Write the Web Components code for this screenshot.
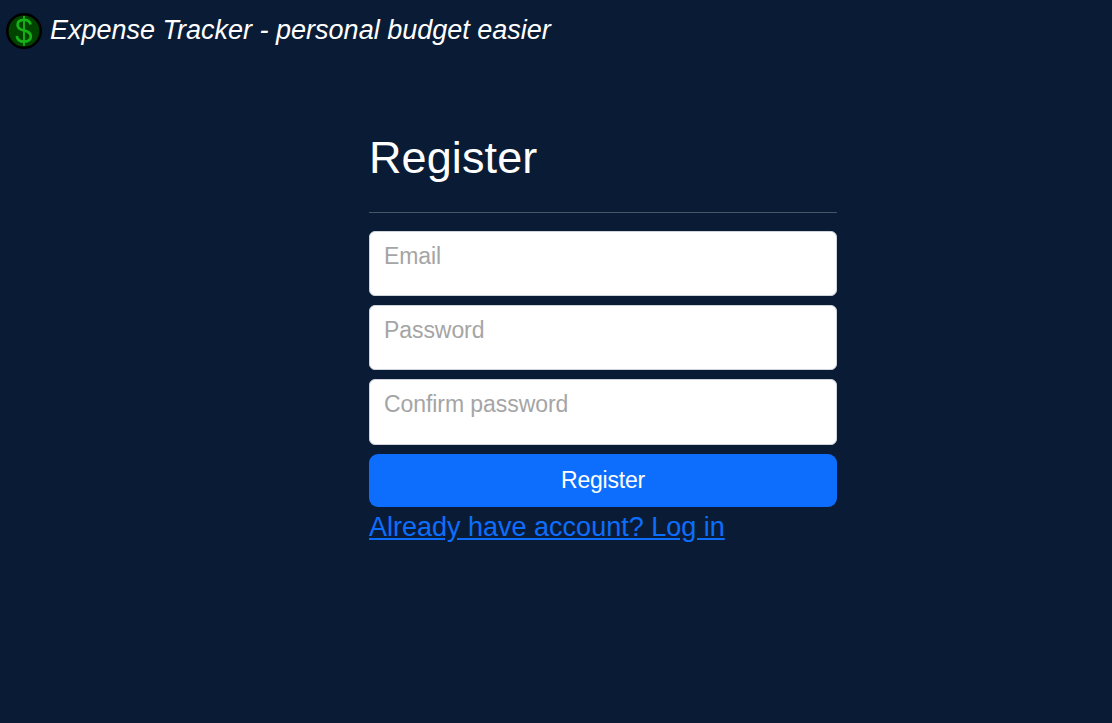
<!DOCTYPE html>
<html lang="en">
<head>
<meta charset="utf-8">
<title>Expense Tracker</title>
<style>
html, body { margin: 0; min-height: 100%; background: #0a1c35; }
body { font-family: "Liberation Sans", Arial, sans-serif; font-size: 27px; line-height: 40px; color: #fff; }
</style>
</head>
<body>
<expense-app></expense-app>
<script>
const define = (name, html) => {
  const template = document.createElement('template');
  template.innerHTML = html;
  customElements.define(name, class extends HTMLElement {
    constructor() {
      super();
      this.attachShadow({ mode: 'open' }).append(template.content.cloneNode(true));
    }
    connectedCallback() {
      const input = this.shadowRoot.querySelector('input');
      if (input) {
        input.placeholder = this.getAttribute('label') || '';
        input.type = this.getAttribute('type') || 'text';
      }
    }
  });
};

define('dollar-logo', `
<style>
:host { display: block; width: 36px; height: 36px; margin-top: 2px; }
svg { display: block; }
</style>
<svg width="36" height="36" viewBox="0 0 36 36" aria-hidden="true">
  <circle cx="18" cy="18" r="16.7" fill="#004400" stroke="#000" stroke-width="2.6"/>
  <path d="M18 3V32.8" stroke="#18b018" stroke-width="1.9" fill="none"/>
  <path d="M24.6 11.6C24 8.4 21.8 6.9 18 6.9C14 6.9 11.6 8.9 11.6 11.9C11.6 15.3 14.1 16.4 18 17.4C22.2 18.5 24.8 19.8 24.8 23.3C24.8 26.8 22.1 28.7 18.1 28.7C13.8 28.7 11.2 26.7 10.8 23" stroke="#18b018" stroke-width="2.7" fill="none"/>
</svg>`);

define('app-header', `
<style>
:host { display: flex; align-items: center; height: 60px; box-sizing: border-box; padding: 0 0 0 6px; gap: 8px; font-style: italic; }
span { white-space: nowrap; }
</style>
<dollar-logo></dollar-logo><span><slot></slot></span>`);

define('text-field', `
<style>
:host { display: block; height: 65px; }
input { display: block; width: 100%; height: 100%; box-sizing: border-box; margin: 0; padding: 0 14px 15px; border: 1px solid #ced4da; border-radius: 6px; background: #fff; color: #212529; font: 23px "Liberation Sans", Arial, sans-serif; letter-spacing: -0.07px; outline: none; }
input::placeholder { color: #a5a5a5; opacity: 1; }
</style>
<input>`);

define('primary-button', `
<style>
:host { display: block; }
button { display: block; width: 100%; height: 53px; margin: 0; padding: 0 0 1px; border: 0; border-radius: 9px; background: #0d6efd; color: #fff; font: 23px "Liberation Sans", Arial, sans-serif; letter-spacing: -0.2px; }
</style>
<button type="button"><slot></slot></button>`);

define('register-form', `
<style>
:host { display: block; width: 468px; margin: 71px 0 0 369px; }
h1 { margin: 0; font-size: 45px; line-height: 54px; font-weight: 400; letter-spacing: 0.1px; }
hr { margin: 27px 0 18px; border: 0; height: 1px; background: #475569; }
.fields { display: grid; gap: 9px; }
a { display: inline-block; color: #0d6efd; text-decoration: underline; white-space: nowrap; }
</style>
<h1>Register</h1>
<hr>
<div class="fields">
  <text-field label="Email"></text-field>
  <text-field label="Password" type="password"></text-field>
  <text-field label="Confirm password" type="password" style="height:66px"></text-field>
  <primary-button>Register</primary-button>
</div>
<a href="#">Already have account? Log in</a>`);

define('expense-app', `
<style>:host { display: flow-root; }</style>
<app-header>Expense Tracker - personal budget easier</app-header>
<register-form></register-form>`);
</script>
</body>
</html>
